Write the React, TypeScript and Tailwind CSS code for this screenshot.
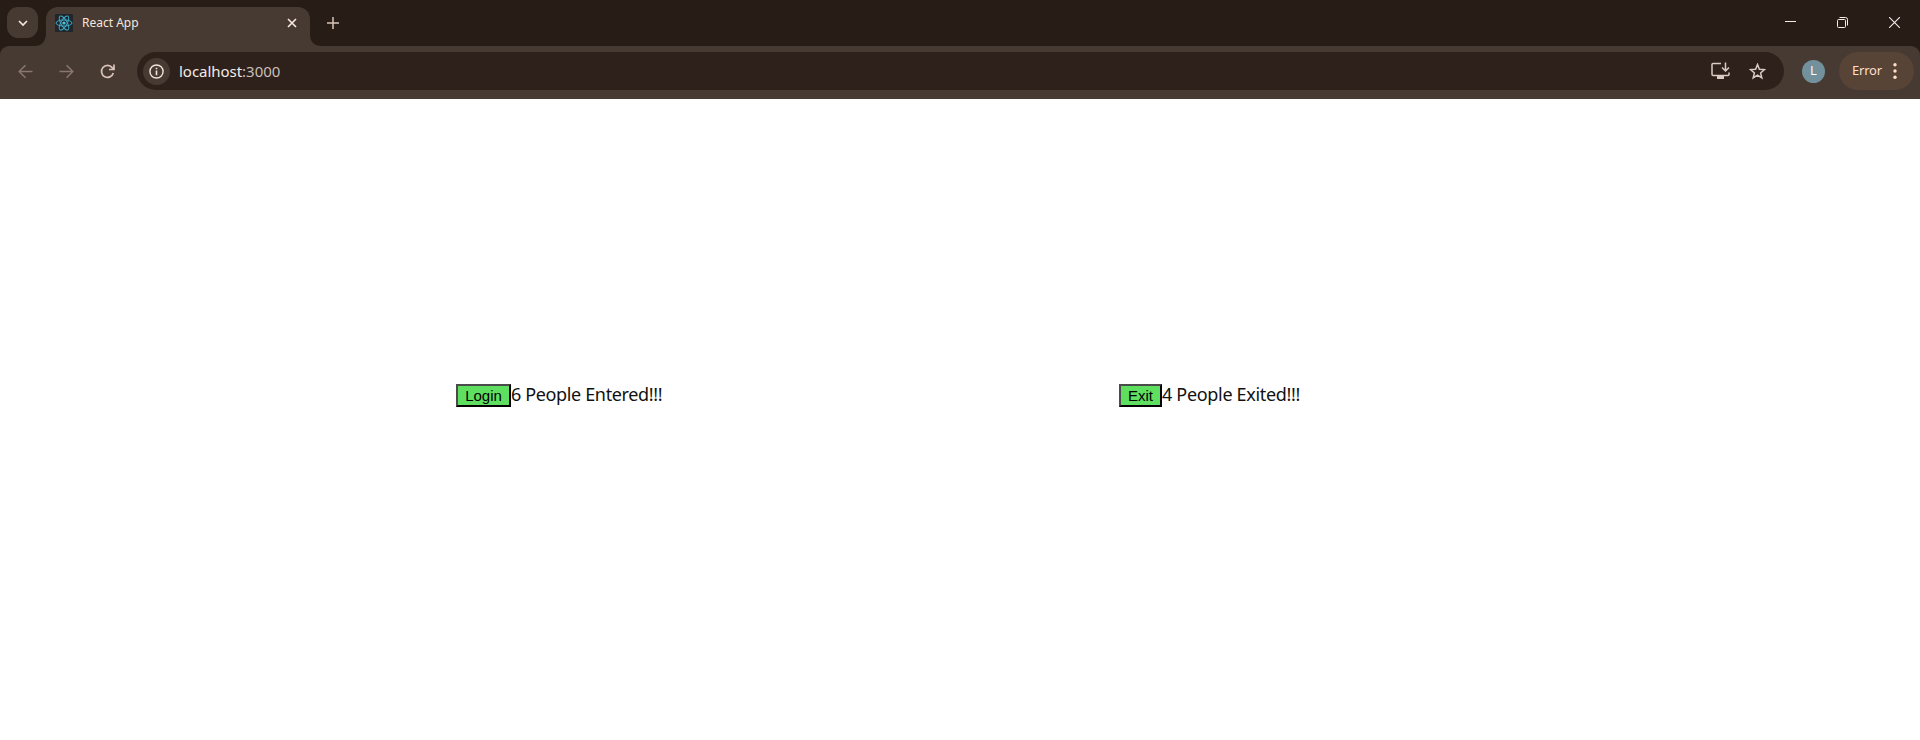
import React from "react";

type IconProps = { className?: string; children: React.ReactNode; box?: string };

function Icon({ className = "", children, box = "0 0 18 18" }: IconProps) {
  return (
    <svg viewBox={box} fill="none" stroke="currentColor" strokeWidth="1.5" className={`shrink-0 ${className}`}>
      {children}
    </svg>
  );
}

function ReactLogo() {
  return (
    <svg viewBox="0 0 18 18" className="h-[18px] w-[18px] shrink-0">
      <rect width="18" height="18" rx="1" fill="#20262b" />
      <g fill="none" stroke="#3fa7c4" strokeWidth="1">
        <ellipse cx="9" cy="9" rx="8" ry="3.1" />
        <ellipse cx="9" cy="9" rx="8" ry="3.1" transform="rotate(60 9 9)" />
        <ellipse cx="9" cy="9" rx="8" ry="3.1" transform="rotate(120 9 9)" />
      </g>
      <circle cx="9" cy="9" r="1.6" fill="#4fc3e0" />
    </svg>
  );
}

function TabStrip() {
  return (
    <div className="flex h-[46px] bg-[#281c17]">
      <button className="mt-[7px] ml-[7px] flex h-[31px] w-[31px] items-center justify-center rounded-[11px] bg-[#473a33] text-[#f5e6de]">
        <Icon className="mt-px h-[10px] w-[10px]" box="0 0 10 10">
          <path d="M1 3l4 4 4-4" strokeWidth="1.700" />
        </Icon>
      </button>
      <svg viewBox="0 0 12 12" className="mt-[34px] -ml-px h-3 w-[9px] overflow-visible" preserveAspectRatio="none">
        <path d="M-3 12C7 12 12 7 12 -2V12Z" fill="#473a33" />
      </svg>
      <div className="mt-[7px] flex h-[39px] w-[264px] items-center rounded-t-[12px] bg-[#473a33] pr-[13px] pb-[7px] pl-[9px] text-[#f5e6de]">
        <ReactLogo />
        <span className="ml-[9px] flex-1 font-['Noto_Sans',sans-serif] text-[12px] leading-[18px]">React App</span>
        <Icon className="h-[10px] w-[10px]" box="0 0 10 10">
          <path d="M1 1l8 8M9 1L1 9" strokeWidth="1.700" />
        </Icon>
      </div>
      <svg viewBox="0 0 12 12" className="mt-[34px] h-3 w-3">
        <path d="M0 0C0 8 4 12 12 12H0Z" fill="#473a33" />
      </svg>
      <Icon className="mt-[17px] ml-[5px] h-3 w-3 text-[#d9c3b8]" box="0 0 12 12">
        <path d="M6 0v12M0 6h12" />
      </Icon>
      <div className="ml-auto flex pt-[17px] pr-[20px] text-[#f4ece8]">
        <Icon className="h-[11px] w-[11px]" box="0 0 11 11">
          <path d="M0 4.5h11" strokeWidth="1" />
        </Icon>
        <Icon className="ml-[41px] h-[11px] w-[11px]" box="0 0 11 11">
          <rect x=".5" y="2.5" width="8" height="8" rx="1" strokeWidth="1" />
          <path d="M2.5 .5H8.5Q10.500 .5 10.500 2.500V8.500" strokeWidth="1" />
        </Icon>
        <Icon className="ml-[41px] h-[11px] w-[11px]" box="0 0 11 11">
          <path d="M0 0l11 11M11 0L0 11" strokeWidth="1.100" />
        </Icon>
      </div>
    </div>
  );
}

function Toolbar() {
  return (
    <div className="bg-[#281c17]">
      <div className="flex h-[53px] items-center rounded-t-[9px] bg-[#473a33] pr-[6px] pb-[3px]">
        <Icon className="ml-[18px] h-[15px] w-[15px] text-[#89776e]" box="0 0 15 15">
          <path d="M14.500 7.500H1.500M7.500 1.200L1.200 7.500l6.300 6.300" />
        </Icon>
        <Icon className="ml-[26px] h-[15px] w-[15px] text-[#89776e]" box="0 0 15 15">
          <path d="M.5 7.500h13M7.500 1.200l6.300 6.300-6.300 6.300" />
        </Icon>
        <Icon className="ml-[26px] h-[15px] w-[15px] text-[#d9c3b8]" box="0 0 15 15">
          <path d="M13.300 9A6 6 0 1 1 12.200 3.600L13.800 5.200M14 .5V5.500H9" strokeWidth="1.700" />
        </Icon>
        <div className="ml-[22px] flex h-[38px] flex-1 items-center rounded-full bg-[#2e211b] pr-[18px] pl-[6px] text-[#d9cbc4]">
          <span className="mt-px flex h-[27px] w-[27px] items-center justify-center rounded-full bg-[#473a33] text-[#f0e3dc]">
            <Icon className="-ml-px h-[15px] w-[15px]" box="0 0 16 16">
              <circle cx="8" cy="8" r="7" />
              <path d="M8 7v5M8 4v1.700" strokeWidth="1.700" />
            </Icon>
          </span>
          <span className="ml-[9px] flex-1 font-['Noto_Sans',sans-serif] text-[15px] leading-5 tracking-[-0.03px] text-[#f5ece7]">
            localhost<span className="text-[#c9beb8]">:3000</span>
          </span>
          <Icon className="h-[18px] w-[19px]" box="0 0 19 18">
            <path d="M10 1.500H2Q1 1.500 1 2.500V12Q1 13.500 2 13.500H17Q18 13.500 18 12.500V10.500M14.500 .5V8.500M11 5.500l3.500 3.500 3.500-3.500" />
            <path d="M6 14h7v3H6z" fill="currentColor" stroke="none" />
          </Icon>
          <Icon className="ml-[19px] h-[17px] w-[17px]" box="0 0 17 17">
            <path d="M8.500 1.500l1.900 4.700 5.100.4-3.900 3.300 1.200 5-4.300-2.700-4.300 2.700 1.200-5L1.500 6.600l5.100-.4z" />
          </Icon>
        </div>
        <span className="ml-[18px] flex h-[23px] w-[23px] items-center justify-center rounded-full bg-[#73909d] font-['Open_Sans',sans-serif] text-[13px] text-white">L</span>
        <button className="ml-[14px] flex h-[38px] w-[75px] items-center rounded-full bg-[#574436] pl-[13px] font-['Noto_Sans',sans-serif] text-[13px] text-[#ffdfcb]">
          <span className="w-[41px] text-left tracking-[-0.2px]">Error</span>
          <svg viewBox="0 0 4 18" className="h-[18px] w-1" fill="currentColor">
            <circle cx="2" cy="2.700" r="1.700" />
            <circle cx="2" cy="9" r="1.700" />
            <circle cx="2" cy="15.300" r="1.700" />
          </svg>
        </button>
      </div>
    </div>
  );
}

function ActionButton({ label, className }: { label: string; className: string }) {
  return (
    <button
      className={`flex h-[23px] items-center justify-center border-2 border-t-[#4b4b4b] border-r-black border-b-black border-l-[#4b4b4b] bg-[#5fdf5f] font-['Liberation_Sans',sans-serif] text-[15px] leading-[19px] text-black ${className}`}
    >
      {label}
    </button>
  );
}

export default function App() {
  return (
    <div className="flex h-[740px] w-[1920px] flex-col overflow-hidden bg-white">
      <TabStrip />
      <Toolbar />
      <main className="flex flex-1 pt-[285px] pl-[456px] font-['Noto_Sans',sans-serif] text-[18px] leading-[20px] text-[#111]">
        <div className="flex w-[663px]">
          <ActionButton label="Login" className="w-[55px]" />
          <span className="whitespace-nowrap tracking-[-0.36px]">6 People Entered!!!</span>
        </div>
        <div className="flex">
          <ActionButton label="Exit" className="w-[43px]" />
          <span className="whitespace-nowrap tracking-[-0.32px]">4 People Exited!!!</span>
        </div>
      </main>
    </div>
  );
}
